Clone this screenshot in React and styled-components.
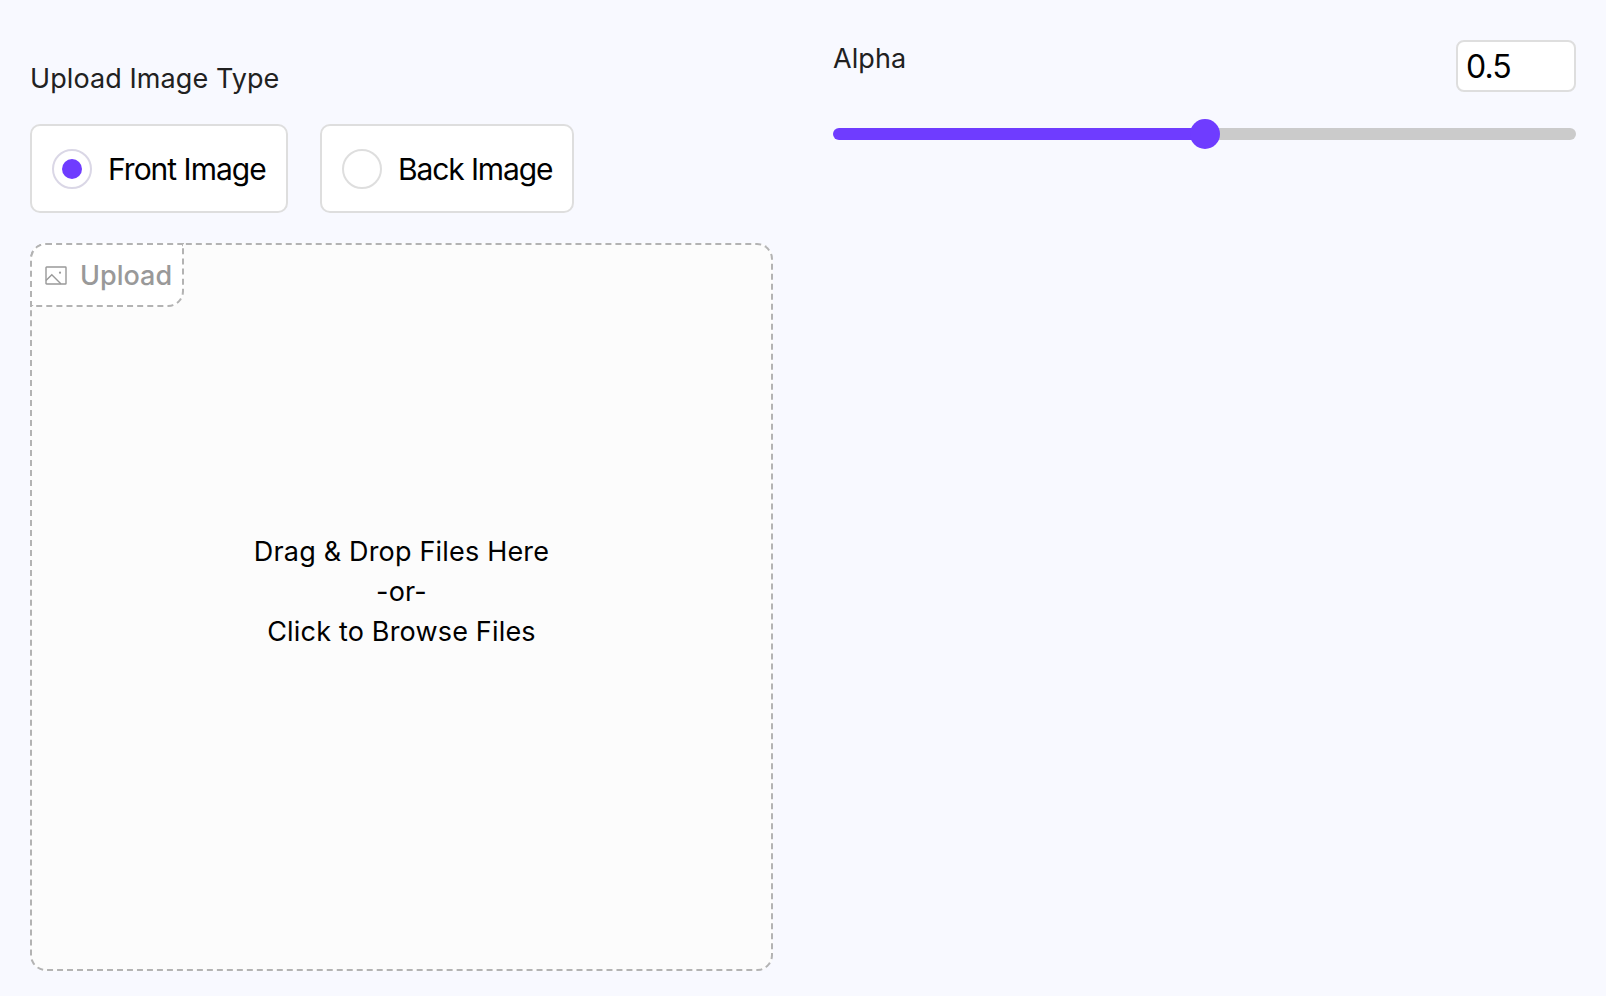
import React, { useState } from "react";
import styled, { createGlobalStyle } from "styled-components";

const GlobalStyle = createGlobalStyle`
  *, *::before, *::after { box-sizing: border-box; }
  body {
    margin: 0;
    background: #f8f9ff;
    font-family: Inter, "Liberation Sans", sans-serif;
    font-size: 28px;
    color: #000;
    -webkit-font-smoothing: antialiased;
  }
`;

const Page = styled.main`
  display: grid;
  grid-template-columns: 743px 743px;
  column-gap: 60px;
  height: 996px;
  padding: 0 30px;
`;

const Column = styled.section`
  display: flex;
  flex-direction: column;
  padding-top: ${(p) => p.$top}px;
`;

const Label = styled.h2`
  margin: 0;
  font-size: 27px;
  line-height: ${(p) => p.$line}px;
  font-weight: 400;
  letter-spacing: 0.08px;
  color: #212121;
`;

const Options = styled.div`
  display: flex;
  gap: 32px;
  margin-top: 24px;
`;

const Option = styled.label`
  display: flex;
  align-items: center;
  gap: 16px;
  width: ${(p) => p.$width}px;
  height: 89px;
  padding-left: 20px;
  border: 2px solid #dedede;
  border-radius: 10px;
  background: #fff;
  font-size: 30px;
  letter-spacing: ${(p) => p.$tracking}px;
  white-space: nowrap;
  cursor: pointer;
`;

const Radio = styled.input`
  appearance: none;
  flex: none;
  display: grid;
  place-items: center;
  width: 40px;
  height: 40px;
  margin: 0;
  border: 2px solid #dedede;
  border-radius: 50%;
  background: #fff;

  &:checked {
    border-color: #dad7e6;
  }
  &:checked::before {
    content: "";
    width: 20px;
    height: 20px;
    border-radius: 50%;
    background: #6f3cff;
  }
`;

const DropZone = styled.div`
  position: relative;
  display: grid;
  place-items: center;
  height: 728px;
  margin-top: 30px;
  border: 2px dashed #b3b3b3;
  border-radius: 16px;
  background: #fcfcfc;
  line-height: 40px;
  text-align: center;
`;

const DropText = styled.div`
  padding-bottom: 30px;
  font-size: 27px;
  letter-spacing: 0.18px;
`;

const UploadTag = styled.div`
  position: absolute;
  top: -2px;
  left: -2px;
  display: flex;
  align-items: center;
  gap: 13px;
  width: 154px;
  height: 64px;
  padding-left: 13px;
  border: 2px dashed #b3b3b3;
  border-radius: 16px 0 16px 0;
  background: #fff;
  color: #999;
  font-size: 27px;
  font-weight: 500;
`;

const TagText = styled.span`
  padding-top: 2px;
`;

const AlphaHeader = styled.div`
  display: flex;
  justify-content: space-between;
  align-items: flex-start;
`;

const NumberField = styled.input`
  width: 120px;
  height: 52px;
  padding: 1px 8px 0;
  border: 2px solid #dedede;
  border-radius: 8px;
  background: #fff;
  font-family: inherit;
  font-size: 32px;
  letter-spacing: -0.9px;
  color: #000;
  outline: none;
`;

const Slider = styled.input`
  appearance: none;
  width: 100%;
  height: 12px;
  margin: 36px 0 0;
  border-radius: 6px;
  background: linear-gradient(to right, #6f3cff ${(p) => p.value * 100}%, #cbcbcb 0);

  &::-webkit-slider-thumb {
    appearance: none;
    width: 30px;
    height: 30px;
    border-radius: 50%;
    background: #6f3cff;
  }
`;

const PictureIcon = () => (
  <svg width="22" height="19" viewBox="0 0 22 19" fill="none" stroke="#999" strokeWidth="1.4">
    <rect x="1" y="1" width="20" height="17" rx="0.6" />
    <path d="M1 14.5 L6.8 8.7 L15.8 17.7" />
    <circle cx="15" cy="6.7" r="1.1" fill="#999" stroke="none" />
  </svg>
);

const TYPES = [
  { id: "front", label: "Front Image", width: 258, tracking: -1 },
  { id: "back", label: "Back Image", width: 254, tracking: -1.12 },
];

export default function App() {
  const [type, setType] = useState("front");
  const [alpha, setAlpha] = useState(0.5);
  return (
    <>
      <GlobalStyle />
      <Page>
        <Column $top={58}>
          <Label $line={42}>Upload Image Type</Label>
          <Options>
            {TYPES.map((t) => (
              <Option key={t.id} $width={t.width} $tracking={t.tracking}>
                <Radio type="radio" name="type" checked={type === t.id} onChange={() => setType(t.id)} />
                {t.label}
              </Option>
            ))}
          </Options>
          <DropZone>
            <UploadTag>
              <PictureIcon />
              <TagText>Upload</TagText>
            </UploadTag>
            <DropText>
              Drag &amp; Drop Files Here
              <br />
              -or-
              <br />
              Click to Browse Files
            </DropText>
          </DropZone>
        </Column>
        <Column $top={40}>
          <AlphaHeader>
            <Label $line={38}>Alpha</Label>
            <NumberField value={alpha} onChange={(e) => setAlpha(e.target.value)} />
          </AlphaHeader>
          <Slider
            type="range"
            min="0"
            max="1"
            step="0.01"
            value={alpha}
            onChange={(e) => setAlpha(e.target.value)}
          />
        </Column>
      </Page>
    </>
  );
}
